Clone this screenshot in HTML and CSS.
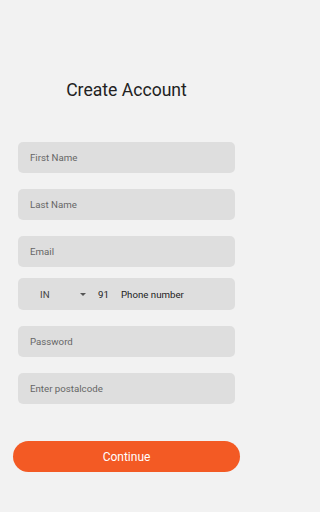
FILE: index.html
```html
<!DOCTYPE html>
<html>
<head>
<meta charset="utf-8">
<link rel="stylesheet" href="styles.css">
</head>
<body>
<div class="screen">
  <h1 class="title">Create Account</h1>
  <div class="form">
    <div class="field">First Name</div>
    <div class="field">Last Name</div>
    <div class="field">Email</div>
    <div class="field phone">
      <span class="country">IN</span>
      <span class="caret"></span>
      <span class="code">91</span>
      <span class="num">Phone number</span>
    </div>
    <div class="field">Password</div>
    <div class="field">Enter postalcode</div>
  </div>
  <div class="btn">Continue</div>
</div>
</body>
</html>
```
FILE: styles.css
```css
html, body {
  margin: 0;
  padding: 0;
  background: #f2f2f2;
}
.screen {
  width: 253px;
  height: 512px;
  font-family: Roboto, "Liberation Sans", sans-serif;
  display: flex;
  flex-direction: column;
}
.title {
  margin: 79px 0 0;
  font-size: 17.6px;
  font-weight: 400;
  line-height: 22px;
  text-align: center;
  color: #222;
}
.form {
  margin: 41px 18px 0 18px;
  display: flex;
  flex-direction: column;
  gap: 16px;
}
.field {
  height: 31px;
  background: #dedede;
  border-radius: 5px;
  display: flex;
  align-items: center;
  padding-left: 12px;
  font-size: 9.7px;
  color: #666;
}
.field.phone {
  height: 32px;
  margin-top: -5px;
  padding-left: 22px;
  color: #222;
}
.country {
  width: 40px;
  color: #444;
}
.caret {
  width: 0;
  height: 0;
  border-left: 3px solid transparent;
  border-right: 3px solid transparent;
  border-top: 3px solid #555;
  margin-right: 12px;
}
.code {
  width: 23px;
}
.btn {
  margin: 37px 13px 0 13px;
  height: 31px;
  border-radius: 16px;
  background: #f35a24;
  color: #fff;
  font-size: 12px;
  display: flex;
  align-items: center;
  justify-content: center;
}
```
